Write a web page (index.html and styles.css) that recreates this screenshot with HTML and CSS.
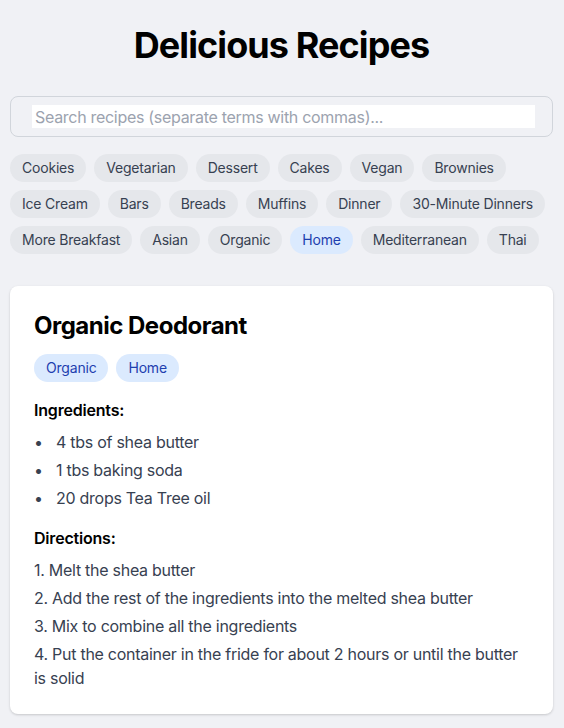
FILE: index.html
```html
<!DOCTYPE html>
<html lang="en">
<head>
<meta charset="utf-8">
<title>Delicious Recipes</title>
<link rel="stylesheet" href="styles.css">
</head>
<body>
<div class="page">
  <h1 class="title">Delicious Recipes</h1>
  <div class="search">
    <input class="search-input" type="text" placeholder="Search recipes (separate terms with commas)...">
  </div>
  <div class="tags">
    <span class="tag">Cookies</span>
    <span class="tag">Vegetarian</span>
    <span class="tag">Dessert</span>
    <span class="tag">Cakes</span>
    <span class="tag">Vegan</span>
    <span class="tag">Brownies</span>
    <span class="tag">Ice Cream</span>
    <span class="tag">Bars</span>
    <span class="tag">Breads</span>
    <span class="tag">Muffins</span>
    <span class="tag">Dinner</span>
    <span class="tag">30-Minute Dinners</span>
    <span class="tag">More Breakfast</span>
    <span class="tag">Asian</span>
    <span class="tag">Organic</span>
    <span class="tag tag-active">Home</span>
    <span class="tag">Mediterranean</span>
    <span class="tag">Thai</span>
  </div>
  <div class="card">
    <h2 class="card-title">Organic Deodorant</h2>
    <div class="card-tags">
      <span class="tag tag-active">Organic</span>
      <span class="tag tag-active">Home</span>
    </div>
    <h3 class="section-title">Ingredients:</h3>
    <ul class="ingredients">
      <li>4 tbs of shea butter</li>
      <li>1 tbs baking soda</li>
      <li>20 drops Tea Tree oil</li>
    </ul>
    <h3 class="section-title">Directions:</h3>
    <div class="directions">
      <p>1. Melt the shea butter</p>
      <p>2. Add the rest of the ingredients into the melted shea butter</p>
      <p>3. Mix to combine all the ingredients</p>
      <p>4. Put the container in the fride for about 2 hours or until the butter is solid</p>
    </div>
  </div>
</div>
</body>
</html>
```
FILE: styles.css
```css
* { box-sizing: border-box; }
html, body { margin: 0; padding: 0; }
body {
  background: #f0f1f5;
  font-family: Inter, "Noto Sans", sans-serif;
  color: #000;
}
.page {
  padding: 25px 11px 14px 10px;
}
.title {
  margin: 0 0 31px;
  font-size: 36px;
  line-height: 40px;
  font-weight: 700;
  letter-spacing: -0.9px;
  text-align: center;
}
.search {
  border: 1px solid #d1d5db;
  border-radius: 8px;
  padding: 8px 17px 8px 21px;
}
.search-input {
  display: block;
  width: 100%;
  height: 23px;
  border: none;
  outline: none;
  background: #fff;
  padding: 0 3px;
  font-family: inherit;
  font-size: 16px;
  letter-spacing: -0.3px;
  color: #374151;
}
.search-input::placeholder { color: #9ca3af; }
.tags {
  margin-top: 17px;
  display: flex;
  flex-wrap: wrap;
  gap: 8px;
}
.tag {
  display: inline-block;
  background: #e5e7eb;
  color: #374151;
  font-size: 14px;
  line-height: 20px;
  letter-spacing: -0.2px;
  padding: 4px 12px;
  border-radius: 9999px;
}
.tag-active {
  background: #dbeafe;
  color: #1e40af;
}
.card {
  margin-top: 32px;
  background: #fff;
  border-radius: 8px;
  box-shadow: 0 1px 3px rgba(0,0,0,0.12), 0 1px 2px rgba(0,0,0,0.06);
  padding: 24px;
}
.card-title {
  margin: 0 0 12px;
  font-size: 24px;
  line-height: 32px;
  font-weight: 700;
  letter-spacing: -0.5px;
}
.card-tags {
  display: flex;
  gap: 8px;
  margin-bottom: 16px;
}
.section-title {
  margin: 0 0 8px;
  font-size: 16px;
  line-height: 24px;
  font-weight: 600;
  letter-spacing: -0.2px;
}
.ingredients {
  margin: 0 0 16px;
  padding: 0;
  list-style: none;
  color: #374151;
  font-size: 16px;
  line-height: 24px;
  letter-spacing: -0.27px;
}
.ingredients li {
  display: flex;
  margin-bottom: 4px;
}
.ingredients li::before {
  content: "•";
  width: 22px;
  flex: none;
}
.directions {
  color: #374151;
  font-size: 16px;
  line-height: 24px;
  letter-spacing: -0.27px;
}
.directions p { margin: 0 0 4px; }
.directions p:last-child { margin-bottom: 0; }
```
